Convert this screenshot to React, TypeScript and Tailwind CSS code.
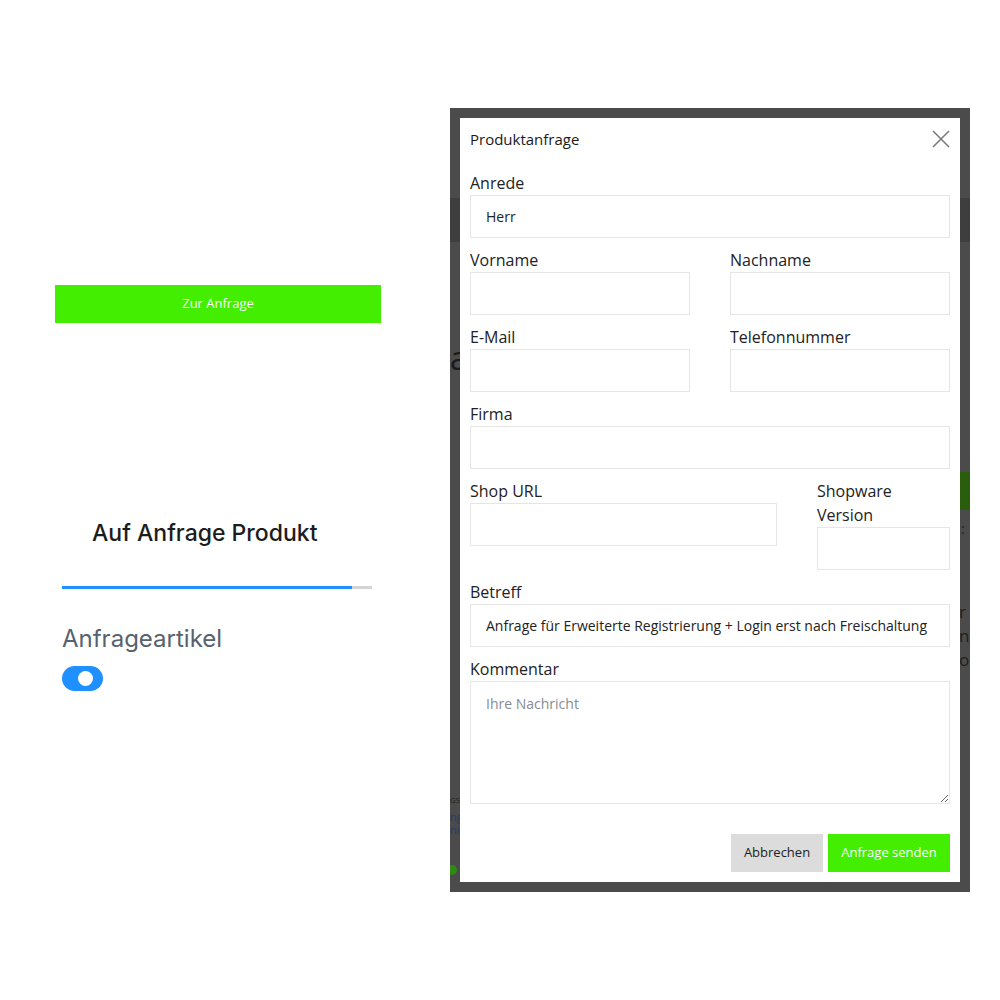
import { useState } from 'react';

function Field({ label, value, placeholder }: { label: string; value?: string; placeholder?: string }) {
  return (
    <div className="flex flex-col">
      <label className="text-[16px] leading-6 text-[#222]">{label}</label>
      <input
        type="text"
        defaultValue={value}
        placeholder={placeholder}
        className="h-[43px] w-full border border-[#e6e6e6] bg-white px-[15px] text-[14px] text-[#222] outline-none"
      />
    </div>
  );
}

function CloseIcon() {
  return (
    <svg width="18" height="18" viewBox="0 0 18 18" fill="none">
      <path d="M1 1 L17 17 M17 1 L1 17" stroke="#7a7a7a" strokeWidth="1.6" />
    </svg>
  );
}

export default function App() {
  const [enabled, setEnabled] = useState(true);

  return (
    <div className="flex h-[1000px] w-[1000px] bg-white" style={{ fontFamily: '"Open Sans", "Liberation Sans", sans-serif' }}>
      {/* left column: product settings */}
      <div className="flex w-[450px] flex-col pl-[55px] pt-[285px]">
        <button className="h-[38px] w-[326px] bg-[#44ee00] text-[13px] text-white">Zur Anfrage</button>

        <h2
          className="ml-[37px] mt-[194px] text-[23px] font-medium leading-8 text-[#1c1c1c]"
          style={{ fontFamily: 'Inter, "Liberation Sans", sans-serif' }}
        >
          Auf Anfrage Produkt
        </h2>

        <div className="ml-[7px] mt-[37px] flex h-[3px] w-[310px] bg-[#d4d4d4]">
          <div className="h-full w-[290px] bg-[#1e90ff]" />
        </div>

        <div
          className="ml-[7px] mt-[36px] text-[24px] leading-7 text-[#56626e]"
          style={{ fontFamily: 'Inter, "Liberation Sans", sans-serif' }}
        >
          Anfrageartikel
        </div>
        <button
          onClick={() => setEnabled(!enabled)}
          className={
            enabled
              ? 'ml-[7px] mt-[13px] flex h-[25px] w-[41px] items-center justify-end rounded-full bg-[#1e90ff] pr-[10px]'
              : 'ml-[7px] mt-[13px] flex h-[25px] w-[41px] items-center justify-start rounded-full bg-[#c8c8c8] pl-[10px]'
          }
        >
          <span className="h-[15px] w-[15px] rounded-full bg-white" />
        </button>
      </div>

      {/* modal over the shop page */}
      <div className="pt-[108px]">
        <div className="relative h-[784px] w-[520px] overflow-hidden bg-[#4b4b4b] p-[10px]">
          <div className="absolute left-0 top-[90px] h-[44px] w-full bg-[#3e3e3e]" />
          <span className="absolute left-[0px] top-[234px] text-[32px] leading-none text-[#1a1a1a]">a</span>
          <div className="absolute left-[510px] top-[364px] h-[38px] w-[10px] bg-[#2a5e0c]" />
          <span className="absolute left-[511px] top-[414px] text-[14px] leading-none text-[#222]">:</span>
          <div className="absolute left-[509px] top-[492px] flex flex-col text-[17px] leading-[24px] text-[#1f1f1f]">
            <span>r</span>
            <span>ng</span>
            <span>or</span>
          </div>
          <span className="absolute left-[0px] top-[688px] text-[8px] leading-none text-[#222]">GSA</span>
          <div className="absolute left-[0px] top-[702px] flex flex-col text-[11px] leading-[13px] text-[#2a3a6a]">
            <span>ng</span>
            <span>nit</span>
          </div>
          <div className="absolute left-[-3px] top-[757px] h-[10px] w-[10px] rounded-full bg-[#2f8a12]" />

          <div className="relative z-10 flex h-[764px] w-[500px] flex-col bg-white px-[10px] pt-[10px]">
            <div className="flex h-[22px] items-center justify-between">
              <span className="text-[15px] text-[#1a1a1a]">Produktanfrage</span>
              <CloseIcon />
            </div>

            <div className="mt-[21px] flex flex-col gap-[10px]">
              <Field label="Anrede" value="Herr" />
              <div className="grid grid-cols-2 gap-x-[40px]">
                <Field label="Vorname" />
                <Field label="Nachname" />
              </div>
              <div className="grid grid-cols-2 gap-x-[40px]">
                <Field label="E-Mail" />
                <Field label="Telefonnummer" />
              </div>
              <Field label="Firma" />
              <div className="grid grid-cols-[307px_133px] items-start gap-x-[40px]">
                <Field label="Shop URL" />
                <Field label="Shopware Version" />
              </div>
              <Field label="Betreff" value="Anfrage für Erweiterte Registrierung + Login erst nach Freischaltung" />
              <div className="flex flex-col">
                <label className="text-[16px] leading-6 text-[#222]">Kommentar</label>
                <textarea
                  placeholder="Ihre Nachricht"
                  className="h-[123px] w-full border border-[#e6e6e6] px-[15px] pt-[11px] text-[14px] leading-[22px] text-[#222] outline-none placeholder:text-[#868b94]"
                />
              </div>
            </div>

            <div className="mt-[30px] flex justify-end gap-[5px]">
              <button className="h-[38px] w-[92px] bg-[#dcdcdc] text-[13px] text-[#222]">Abbrechen</button>
              <button className="h-[38px] w-[122px] bg-[#44ee00] text-[13px] text-white">Anfrage senden</button>
            </div>
          </div>
        </div>
      </div>
    </div>
  );
}
